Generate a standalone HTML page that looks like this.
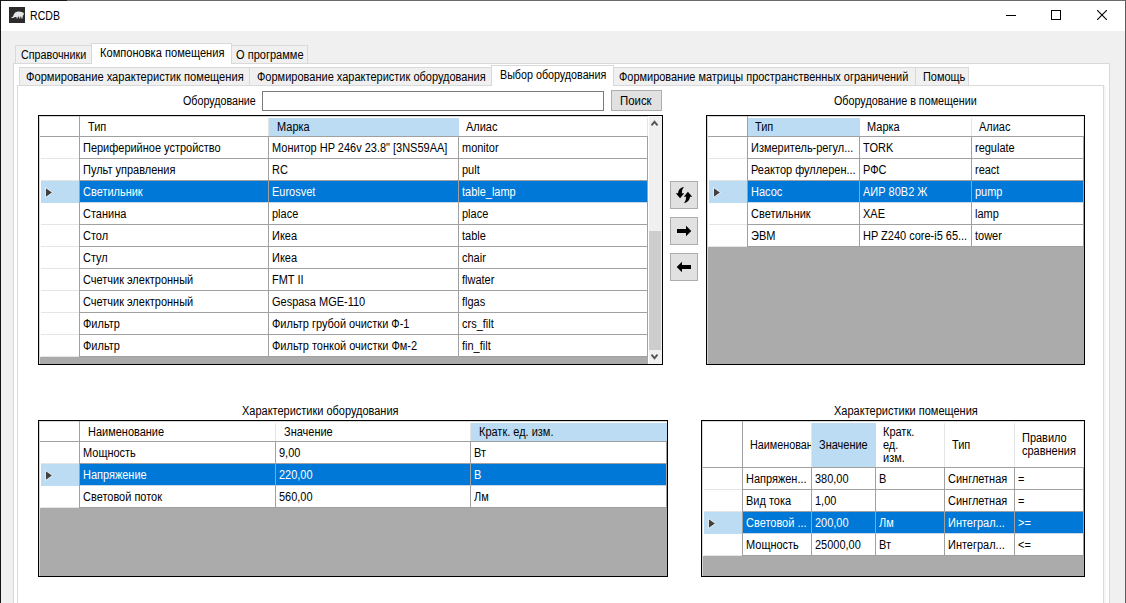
<!DOCTYPE html>
<html><head><meta charset="utf-8"><style>
html,body{margin:0;padding:0}
body{width:1126px;height:603px;overflow:hidden;position:relative;background:#f0f0f0}
body>div{position:absolute;box-sizing:content-box}
.t{position:absolute;font-family:"Liberation Sans",sans-serif;font-size:12px;line-height:12px;white-space:nowrap;transform-origin:0 0}
.c{position:absolute;height:14px;overflow:hidden}
</style></head><body>
<div style="left:0px;top:0px;width:1126px;height:603px;background:#f0f0f0;"></div>
<div style="left:1px;top:1px;width:1124px;height:30px;background:#fff;"></div>
<div style="left:0px;top:0px;width:1126px;height:1px;background:#6a6a6a;"></div>
<div style="left:0px;top:0px;width:67px;height:1px;background:#1a1a1a;"></div>
<div style="left:0px;top:0px;width:1px;height:603px;background:#141414;"></div>
<div style="left:1125px;top:0px;width:1px;height:603px;background:#5c5c5c;"></div>
<div style="left:9px;top:7px;width:16px;height:16px;background:#2b2b2b;"></div>
<svg style="position:absolute;left:9px;top:7px" width="16" height="16" viewBox="0 0 16 16"><path d="M2 10.8 L4 9.4 L5 7 Q6 4.8 9 4.5 Q13 4.2 14.8 6 Q15.2 7.5 14 8.6 L13.4 11.6 L12.4 11.6 L12.2 9.6 L11.4 9.6 L11.2 11.4 L10.3 11.4 L10.1 9.7 L8.8 9.7 L8.6 11.5 L7.7 11.5 L7.4 9.9 L6 10.1 Q4.5 11.4 2 10.8 Z" fill="#e6e6e6"/></svg>
<div class="t" style="left:30px;top:10px;color:#000;transform:scaleX(0.88);">RCDB</div>
<div style="left:1006px;top:15px;width:10px;height:1px;background:#000;"></div>
<div style="left:1051px;top:10px;width:8px;height:8px;border:1px solid #000;background:transparent;"></div>
<svg style="position:absolute;left:1097px;top:10px" width="10" height="10" viewBox="0 0 10 10"><path d="M0 0 L10 10 M10 0 L0 10" stroke="#000" stroke-width="1.1"/></svg>
<div style="left:13px;top:63px;width:1097px;height:540px;background:#d9d9d9;"></div>
<div style="left:14px;top:64px;width:1095px;height:539px;background:#fff;"></div>
<div style="left:15px;top:45px;width:75px;height:17px;border:1px solid #d9d9d9;background:#f0f0f0;border-bottom:none;height:17px"></div>
<div style="left:231px;top:45px;width:75px;height:17px;border:1px solid #d9d9d9;background:#f0f0f0;border-bottom:none;height:17px"></div>
<div style="left:91px;top:43px;width:139px;height:19px;border:1px solid #d9d9d9;background:#fff;border-bottom:none;height:20px"></div>
<div class="t" style="left:21px;top:49px;color:#000;transform:scaleX(0.897237);">Справочники</div>
<div class="t" style="left:100px;top:47px;color:#000;transform:scaleX(0.924264);">Компоновка помещения</div>
<div class="t" style="left:236px;top:49px;color:#000;transform:scaleX(0.920403);">О программе</div>
<div style="left:17px;top:85px;width:1087px;height:518px;background:#d9d9d9;"></div>
<div style="left:18px;top:86px;width:1085px;height:517px;background:#fff;"></div>
<div style="left:1104px;top:86px;width:2px;height:517px;background:#f5f5f5;"></div>
<div style="left:19px;top:67px;width:229px;height:17px;border:1px solid #d9d9d9;background:#f0f0f0;border-bottom:none;height:17px"></div>
<div style="left:249px;top:67px;width:241px;height:17px;border:1px solid #d9d9d9;background:#f0f0f0;border-bottom:none;height:17px"></div>
<div style="left:613px;top:67px;width:301px;height:17px;border:1px solid #d9d9d9;background:#f0f0f0;border-bottom:none;height:17px"></div>
<div style="left:915px;top:67px;width:52px;height:17px;border:1px solid #d9d9d9;background:#f0f0f0;border-bottom:none;height:17px"></div>
<div style="left:491px;top:65px;width:121px;height:19px;border:1px solid #d9d9d9;background:#fff;border-bottom:none;height:20px"></div>
<div class="t" style="left:26px;top:71px;color:#000;transform:scaleX(0.926937);">Формирование характеристик помещения</div>
<div class="t" style="left:257px;top:71px;color:#000;transform:scaleX(0.917235);">Формирование характеристик оборудования</div>
<div class="t" style="left:500px;top:69px;color:#000;transform:scaleX(0.89397);">Выбор оборудования</div>
<div class="t" style="left:619px;top:71px;color:#000;transform:scaleX(0.9125819999999999);">Формирование матрицы пространственных ограничений</div>
<div class="t" style="left:923px;top:71px;color:#000;transform:scaleX(0.912087);">Помощь</div>
<div class="t" style="left:183px;top:95px;color:#000;transform:scaleX(0.891594);">Оборудование</div>
<div style="left:262px;top:91px;width:340px;height:18px;border:1px solid #7a7a7a;background:#fff;"></div>
<div style="left:611px;top:90px;width:49px;height:19px;border:1px solid #adadad;background:#e1e1e1;"></div>
<div class="t" style="left:620px;top:95px;color:#000;transform:scaleX(0.9503999999999999);">Поиск</div>
<div class="t" style="left:834px;top:95px;color:#000;transform:scaleX(0.896346);">Оборудование в помещении</div>
<div style="left:38px;top:115px;width:623px;height:248px;border:1px solid #000;background:#ababab;"></div>
<div style="left:39px;top:116px;width:623px;height:20px;background:#fff;"></div>
<div style="left:39px;top:116px;width:623px;height:1px;background:#d8d8d8;"></div>
<div style="left:39px;top:136px;width:609px;height:1px;background:#a0a0a0;"></div>
<div style="left:79px;top:116px;width:1px;height:21px;background:#a0a0a0;"></div>
<div style="left:268px;top:118px;width:1px;height:18px;background:#e5e5e5;"></div>
<div style="left:458px;top:118px;width:1px;height:18px;background:#e5e5e5;"></div>
<div style="left:647px;top:118px;width:1px;height:18px;background:#e5e5e5;"></div>
<div style="left:269px;top:118px;width:190px;height:18px;background:#bcdcf4;"></div>
<div style="left:39px;top:137px;width:609px;height:22px;background:#fff;"></div>
<div style="left:41px;top:158px;width:38px;height:1px;background:#e5e5e5;"></div>
<div style="left:80px;top:158px;width:568px;height:1px;background:#a0a0a0;"></div>
<div style="left:79px;top:137px;width:1px;height:22px;background:#a0a0a0;"></div>
<div style="left:268px;top:137px;width:1px;height:22px;background:#a0a0a0;"></div>
<div style="left:458px;top:137px;width:1px;height:22px;background:#a0a0a0;"></div>
<div style="left:647px;top:137px;width:1px;height:22px;background:#a0a0a0;"></div>
<div style="left:39px;top:159px;width:609px;height:22px;background:#fff;"></div>
<div style="left:41px;top:180px;width:38px;height:1px;background:#e5e5e5;"></div>
<div style="left:80px;top:180px;width:568px;height:1px;background:#a0a0a0;"></div>
<div style="left:79px;top:159px;width:1px;height:22px;background:#a0a0a0;"></div>
<div style="left:268px;top:159px;width:1px;height:22px;background:#a0a0a0;"></div>
<div style="left:458px;top:159px;width:1px;height:22px;background:#a0a0a0;"></div>
<div style="left:647px;top:159px;width:1px;height:22px;background:#a0a0a0;"></div>
<div style="left:39px;top:181px;width:609px;height:22px;background:#fff;"></div>
<div style="left:41px;top:181px;width:38px;height:22px;background:#bcdcf4;"></div>
<div style="left:80px;top:181px;width:568px;height:21px;background:#0078d7;"></div>
<div style="left:80px;top:202px;width:568px;height:1px;background:#c8d8e8;"></div>
<svg style="position:absolute;left:45px;top:187px" width="9" height="12" viewBox="0 0 9 12"><path d="M0.5 0.5 L7.5 5.5 L0.5 10.5 Z" fill="#404040" stroke="#fff" stroke-width="0.8"/></svg>
<div style="left:79px;top:181px;width:1px;height:22px;background:#a0a0a0;"></div>
<div style="left:268px;top:181px;width:1px;height:22px;background:#a0a0a0;"></div>
<div style="left:458px;top:181px;width:1px;height:22px;background:#a0a0a0;"></div>
<div style="left:647px;top:181px;width:1px;height:22px;background:#a0a0a0;"></div>
<div style="left:39px;top:203px;width:609px;height:22px;background:#fff;"></div>
<div style="left:41px;top:224px;width:38px;height:1px;background:#e5e5e5;"></div>
<div style="left:80px;top:224px;width:568px;height:1px;background:#a0a0a0;"></div>
<div style="left:79px;top:203px;width:1px;height:22px;background:#a0a0a0;"></div>
<div style="left:268px;top:203px;width:1px;height:22px;background:#a0a0a0;"></div>
<div style="left:458px;top:203px;width:1px;height:22px;background:#a0a0a0;"></div>
<div style="left:647px;top:203px;width:1px;height:22px;background:#a0a0a0;"></div>
<div style="left:39px;top:225px;width:609px;height:22px;background:#fff;"></div>
<div style="left:41px;top:246px;width:38px;height:1px;background:#e5e5e5;"></div>
<div style="left:80px;top:246px;width:568px;height:1px;background:#a0a0a0;"></div>
<div style="left:79px;top:225px;width:1px;height:22px;background:#a0a0a0;"></div>
<div style="left:268px;top:225px;width:1px;height:22px;background:#a0a0a0;"></div>
<div style="left:458px;top:225px;width:1px;height:22px;background:#a0a0a0;"></div>
<div style="left:647px;top:225px;width:1px;height:22px;background:#a0a0a0;"></div>
<div style="left:39px;top:247px;width:609px;height:22px;background:#fff;"></div>
<div style="left:41px;top:268px;width:38px;height:1px;background:#e5e5e5;"></div>
<div style="left:80px;top:268px;width:568px;height:1px;background:#a0a0a0;"></div>
<div style="left:79px;top:247px;width:1px;height:22px;background:#a0a0a0;"></div>
<div style="left:268px;top:247px;width:1px;height:22px;background:#a0a0a0;"></div>
<div style="left:458px;top:247px;width:1px;height:22px;background:#a0a0a0;"></div>
<div style="left:647px;top:247px;width:1px;height:22px;background:#a0a0a0;"></div>
<div style="left:39px;top:269px;width:609px;height:22px;background:#fff;"></div>
<div style="left:41px;top:290px;width:38px;height:1px;background:#e5e5e5;"></div>
<div style="left:80px;top:290px;width:568px;height:1px;background:#a0a0a0;"></div>
<div style="left:79px;top:269px;width:1px;height:22px;background:#a0a0a0;"></div>
<div style="left:268px;top:269px;width:1px;height:22px;background:#a0a0a0;"></div>
<div style="left:458px;top:269px;width:1px;height:22px;background:#a0a0a0;"></div>
<div style="left:647px;top:269px;width:1px;height:22px;background:#a0a0a0;"></div>
<div style="left:39px;top:291px;width:609px;height:22px;background:#fff;"></div>
<div style="left:41px;top:312px;width:38px;height:1px;background:#e5e5e5;"></div>
<div style="left:80px;top:312px;width:568px;height:1px;background:#a0a0a0;"></div>
<div style="left:79px;top:291px;width:1px;height:22px;background:#a0a0a0;"></div>
<div style="left:268px;top:291px;width:1px;height:22px;background:#a0a0a0;"></div>
<div style="left:458px;top:291px;width:1px;height:22px;background:#a0a0a0;"></div>
<div style="left:647px;top:291px;width:1px;height:22px;background:#a0a0a0;"></div>
<div style="left:39px;top:313px;width:609px;height:22px;background:#fff;"></div>
<div style="left:41px;top:334px;width:38px;height:1px;background:#e5e5e5;"></div>
<div style="left:80px;top:334px;width:568px;height:1px;background:#a0a0a0;"></div>
<div style="left:79px;top:313px;width:1px;height:22px;background:#a0a0a0;"></div>
<div style="left:268px;top:313px;width:1px;height:22px;background:#a0a0a0;"></div>
<div style="left:458px;top:313px;width:1px;height:22px;background:#a0a0a0;"></div>
<div style="left:647px;top:313px;width:1px;height:22px;background:#a0a0a0;"></div>
<div style="left:39px;top:335px;width:609px;height:22px;background:#fff;"></div>
<div style="left:41px;top:356px;width:38px;height:1px;background:#e5e5e5;"></div>
<div style="left:80px;top:356px;width:568px;height:1px;background:#a0a0a0;"></div>
<div style="left:79px;top:335px;width:1px;height:22px;background:#a0a0a0;"></div>
<div style="left:268px;top:335px;width:1px;height:22px;background:#a0a0a0;"></div>
<div style="left:458px;top:335px;width:1px;height:22px;background:#a0a0a0;"></div>
<div style="left:647px;top:335px;width:1px;height:22px;background:#a0a0a0;"></div>
<div style="left:39px;top:116px;width:1px;height:248px;background:#d4d4d4;"></div>
<div class="t" style="left:88px;top:121px;color:#000;transform:scaleX(0.915);">Тип</div>
<div class="t" style="left:277px;top:121px;color:#000;transform:scaleX(0.915);">Марка</div>
<div class="t" style="left:466px;top:121px;color:#000;transform:scaleX(0.915);">Алиас</div>
<div class="c" style="left:80px;top:142px;width:188px;"><div class="t" style="left:3px;top:0;color:#000;transform:scaleX(0.915)">Периферийное устройство</div></div>
<div class="c" style="left:269px;top:142px;width:189px;"><div class="t" style="left:3px;top:0;color:#000;transform:scaleX(0.915)">Монитор HP 246v 23.8" [3NS59AA]</div></div>
<div class="c" style="left:459px;top:142px;width:188px;"><div class="t" style="left:3px;top:0;color:#000;transform:scaleX(0.915)">monitor</div></div>
<div class="c" style="left:80px;top:164px;width:188px;"><div class="t" style="left:3px;top:0;color:#000;transform:scaleX(0.915)">Пульт управления</div></div>
<div class="c" style="left:269px;top:164px;width:189px;"><div class="t" style="left:3px;top:0;color:#000;transform:scaleX(0.915)">RC</div></div>
<div class="c" style="left:459px;top:164px;width:188px;"><div class="t" style="left:3px;top:0;color:#000;transform:scaleX(0.915)">pult</div></div>
<div class="c" style="left:80px;top:186px;width:188px;"><div class="t" style="left:3px;top:0;color:#fff;transform:scaleX(0.915)">Светильник</div></div>
<div class="c" style="left:269px;top:186px;width:189px;"><div class="t" style="left:3px;top:0;color:#fff;transform:scaleX(0.915)">Eurosvet</div></div>
<div class="c" style="left:459px;top:186px;width:188px;"><div class="t" style="left:3px;top:0;color:#fff;transform:scaleX(0.915)">table_lamp</div></div>
<div class="c" style="left:80px;top:208px;width:188px;"><div class="t" style="left:3px;top:0;color:#000;transform:scaleX(0.915)">Станина</div></div>
<div class="c" style="left:269px;top:208px;width:189px;"><div class="t" style="left:3px;top:0;color:#000;transform:scaleX(0.915)">place</div></div>
<div class="c" style="left:459px;top:208px;width:188px;"><div class="t" style="left:3px;top:0;color:#000;transform:scaleX(0.915)">place</div></div>
<div class="c" style="left:80px;top:230px;width:188px;"><div class="t" style="left:3px;top:0;color:#000;transform:scaleX(0.915)">Стол</div></div>
<div class="c" style="left:269px;top:230px;width:189px;"><div class="t" style="left:3px;top:0;color:#000;transform:scaleX(0.915)">Икеа</div></div>
<div class="c" style="left:459px;top:230px;width:188px;"><div class="t" style="left:3px;top:0;color:#000;transform:scaleX(0.915)">table</div></div>
<div class="c" style="left:80px;top:252px;width:188px;"><div class="t" style="left:3px;top:0;color:#000;transform:scaleX(0.915)">Стул</div></div>
<div class="c" style="left:269px;top:252px;width:189px;"><div class="t" style="left:3px;top:0;color:#000;transform:scaleX(0.915)">Икеа</div></div>
<div class="c" style="left:459px;top:252px;width:188px;"><div class="t" style="left:3px;top:0;color:#000;transform:scaleX(0.915)">chair</div></div>
<div class="c" style="left:80px;top:274px;width:188px;"><div class="t" style="left:3px;top:0;color:#000;transform:scaleX(0.915)">Счетчик электронный</div></div>
<div class="c" style="left:269px;top:274px;width:189px;"><div class="t" style="left:3px;top:0;color:#000;transform:scaleX(0.915)">FMT II</div></div>
<div class="c" style="left:459px;top:274px;width:188px;"><div class="t" style="left:3px;top:0;color:#000;transform:scaleX(0.915)">flwater</div></div>
<div class="c" style="left:80px;top:296px;width:188px;"><div class="t" style="left:3px;top:0;color:#000;transform:scaleX(0.915)">Счетчик электронный</div></div>
<div class="c" style="left:269px;top:296px;width:189px;"><div class="t" style="left:3px;top:0;color:#000;transform:scaleX(0.915)">Gespasa MGE-110</div></div>
<div class="c" style="left:459px;top:296px;width:188px;"><div class="t" style="left:3px;top:0;color:#000;transform:scaleX(0.915)">flgas</div></div>
<div class="c" style="left:80px;top:318px;width:188px;"><div class="t" style="left:3px;top:0;color:#000;transform:scaleX(0.915)">Фильтр</div></div>
<div class="c" style="left:269px;top:318px;width:189px;"><div class="t" style="left:3px;top:0;color:#000;transform:scaleX(0.915)">Фильтр грубой очистки Ф-1</div></div>
<div class="c" style="left:459px;top:318px;width:188px;"><div class="t" style="left:3px;top:0;color:#000;transform:scaleX(0.915)">crs_filt</div></div>
<div class="c" style="left:80px;top:340px;width:188px;"><div class="t" style="left:3px;top:0;color:#000;transform:scaleX(0.915)">Фильтр</div></div>
<div class="c" style="left:269px;top:340px;width:189px;"><div class="t" style="left:3px;top:0;color:#000;transform:scaleX(0.915)">Фильтр тонкой очистки Фм-2</div></div>
<div class="c" style="left:459px;top:340px;width:188px;"><div class="t" style="left:3px;top:0;color:#000;transform:scaleX(0.915)">fin_filt</div></div>
<div style="left:648px;top:116px;width:1px;height:248px;background:#fff;"></div>
<div style="left:649px;top:116px;width:13px;height:248px;background:#f0f0f0;"></div>
<div style="left:649px;top:231px;width:12px;height:119px;background:#cdcdcd;"></div>
<svg style="position:absolute;left:650px;top:119px" width="10" height="8" viewBox="0 0 10 8"><path d="M1.5 6.3 L4.5 2.8 L7.5 6.3" fill="none" stroke="#555" stroke-width="1.9"/></svg>
<svg style="position:absolute;left:650px;top:353px" width="10" height="8" viewBox="0 0 10 8"><path d="M1.5 1.7 L4.5 5.2 L7.5 1.7" fill="none" stroke="#555" stroke-width="1.9"/></svg>
<div style="left:706px;top:115px;width:377px;height:248px;border:1px solid #000;background:#ababab;"></div>
<div style="left:707px;top:116px;width:377px;height:20px;background:#fff;"></div>
<div style="left:707px;top:116px;width:377px;height:1px;background:#d8d8d8;"></div>
<div style="left:707px;top:136px;width:377px;height:1px;background:#a0a0a0;"></div>
<div style="left:747px;top:116px;width:1px;height:21px;background:#a0a0a0;"></div>
<div style="left:859px;top:118px;width:1px;height:18px;background:#e5e5e5;"></div>
<div style="left:971px;top:118px;width:1px;height:18px;background:#e5e5e5;"></div>
<div style="left:1083px;top:118px;width:1px;height:18px;background:#e5e5e5;"></div>
<div style="left:748px;top:118px;width:112px;height:18px;background:#bcdcf4;"></div>
<div style="left:707px;top:137px;width:377px;height:22px;background:#fff;"></div>
<div style="left:709px;top:158px;width:38px;height:1px;background:#e5e5e5;"></div>
<div style="left:748px;top:158px;width:336px;height:1px;background:#a0a0a0;"></div>
<div style="left:747px;top:137px;width:1px;height:22px;background:#a0a0a0;"></div>
<div style="left:859px;top:137px;width:1px;height:22px;background:#a0a0a0;"></div>
<div style="left:971px;top:137px;width:1px;height:22px;background:#a0a0a0;"></div>
<div style="left:1083px;top:137px;width:1px;height:22px;background:#a0a0a0;"></div>
<div style="left:707px;top:159px;width:377px;height:22px;background:#fff;"></div>
<div style="left:709px;top:180px;width:38px;height:1px;background:#e5e5e5;"></div>
<div style="left:748px;top:180px;width:336px;height:1px;background:#a0a0a0;"></div>
<div style="left:747px;top:159px;width:1px;height:22px;background:#a0a0a0;"></div>
<div style="left:859px;top:159px;width:1px;height:22px;background:#a0a0a0;"></div>
<div style="left:971px;top:159px;width:1px;height:22px;background:#a0a0a0;"></div>
<div style="left:1083px;top:159px;width:1px;height:22px;background:#a0a0a0;"></div>
<div style="left:707px;top:181px;width:377px;height:22px;background:#fff;"></div>
<div style="left:709px;top:181px;width:38px;height:22px;background:#bcdcf4;"></div>
<div style="left:748px;top:181px;width:336px;height:21px;background:#0078d7;"></div>
<div style="left:748px;top:202px;width:336px;height:1px;background:#c8d8e8;"></div>
<svg style="position:absolute;left:713px;top:187px" width="9" height="12" viewBox="0 0 9 12"><path d="M0.5 0.5 L7.5 5.5 L0.5 10.5 Z" fill="#404040" stroke="#fff" stroke-width="0.8"/></svg>
<div style="left:747px;top:181px;width:1px;height:22px;background:#a0a0a0;"></div>
<div style="left:859px;top:181px;width:1px;height:22px;background:#a0a0a0;"></div>
<div style="left:971px;top:181px;width:1px;height:22px;background:#a0a0a0;"></div>
<div style="left:1083px;top:181px;width:1px;height:22px;background:#a0a0a0;"></div>
<div style="left:707px;top:203px;width:377px;height:22px;background:#fff;"></div>
<div style="left:709px;top:224px;width:38px;height:1px;background:#e5e5e5;"></div>
<div style="left:748px;top:224px;width:336px;height:1px;background:#a0a0a0;"></div>
<div style="left:747px;top:203px;width:1px;height:22px;background:#a0a0a0;"></div>
<div style="left:859px;top:203px;width:1px;height:22px;background:#a0a0a0;"></div>
<div style="left:971px;top:203px;width:1px;height:22px;background:#a0a0a0;"></div>
<div style="left:1083px;top:203px;width:1px;height:22px;background:#a0a0a0;"></div>
<div style="left:707px;top:225px;width:377px;height:22px;background:#fff;"></div>
<div style="left:709px;top:246px;width:38px;height:1px;background:#e5e5e5;"></div>
<div style="left:748px;top:246px;width:336px;height:1px;background:#a0a0a0;"></div>
<div style="left:747px;top:225px;width:1px;height:22px;background:#a0a0a0;"></div>
<div style="left:859px;top:225px;width:1px;height:22px;background:#a0a0a0;"></div>
<div style="left:971px;top:225px;width:1px;height:22px;background:#a0a0a0;"></div>
<div style="left:1083px;top:225px;width:1px;height:22px;background:#a0a0a0;"></div>
<div style="left:707px;top:116px;width:1px;height:248px;background:#d4d4d4;"></div>
<div class="t" style="left:755px;top:121px;color:#000;transform:scaleX(0.915);">Тип</div>
<div class="t" style="left:867px;top:121px;color:#000;transform:scaleX(0.915);">Марка</div>
<div class="t" style="left:979px;top:121px;color:#000;transform:scaleX(0.915);">Алиас</div>
<div class="c" style="left:748px;top:142px;width:111px;"><div class="t" style="left:3px;top:0;color:#000;transform:scaleX(0.915)">Измеритель-регул...</div></div>
<div class="c" style="left:860px;top:142px;width:111px;"><div class="t" style="left:3px;top:0;color:#000;transform:scaleX(0.915)">TORK</div></div>
<div class="c" style="left:972px;top:142px;width:111px;"><div class="t" style="left:3px;top:0;color:#000;transform:scaleX(0.915)">regulate</div></div>
<div class="c" style="left:748px;top:164px;width:111px;"><div class="t" style="left:3px;top:0;color:#000;transform:scaleX(0.915)">Реактор фуллерен...</div></div>
<div class="c" style="left:860px;top:164px;width:111px;"><div class="t" style="left:3px;top:0;color:#000;transform:scaleX(0.915)">РФС</div></div>
<div class="c" style="left:972px;top:164px;width:111px;"><div class="t" style="left:3px;top:0;color:#000;transform:scaleX(0.915)">react</div></div>
<div class="c" style="left:748px;top:186px;width:111px;"><div class="t" style="left:3px;top:0;color:#fff;transform:scaleX(0.915)">Насос</div></div>
<div class="c" style="left:860px;top:186px;width:111px;"><div class="t" style="left:3px;top:0;color:#fff;transform:scaleX(0.915)">АИР 80В2 Ж</div></div>
<div class="c" style="left:972px;top:186px;width:111px;"><div class="t" style="left:3px;top:0;color:#fff;transform:scaleX(0.915)">pump</div></div>
<div class="c" style="left:748px;top:208px;width:111px;"><div class="t" style="left:3px;top:0;color:#000;transform:scaleX(0.915)">Светильник</div></div>
<div class="c" style="left:860px;top:208px;width:111px;"><div class="t" style="left:3px;top:0;color:#000;transform:scaleX(0.915)">XAE</div></div>
<div class="c" style="left:972px;top:208px;width:111px;"><div class="t" style="left:3px;top:0;color:#000;transform:scaleX(0.915)">lamp</div></div>
<div class="c" style="left:748px;top:230px;width:111px;"><div class="t" style="left:3px;top:0;color:#000;transform:scaleX(0.915)">ЭВМ</div></div>
<div class="c" style="left:860px;top:230px;width:111px;"><div class="t" style="left:3px;top:0;color:#000;transform:scaleX(0.915)">HP Z240 core-i5 65...</div></div>
<div class="c" style="left:972px;top:230px;width:111px;"><div class="t" style="left:3px;top:0;color:#000;transform:scaleX(0.915)">tower</div></div>
<div style="left:670px;top:181px;width:26px;height:26px;border:1px solid #adadad;background:#e1e1e1;"></div>
<div style="left:670px;top:217px;width:26px;height:26px;border:1px solid #adadad;background:#e1e1e1;"></div>
<div style="left:670px;top:253px;width:26px;height:26px;border:1px solid #adadad;background:#e1e1e1;"></div>
<svg style="position:absolute;left:670px;top:181px" width="28" height="28" viewBox="0 0 28 28">
<path d="M13.9 5.8 Q8.3 7.3 8 12.2 L5.8 12.2 L10.1 17.3 L14.2 12.2 L11.8 12.2 Q11.8 8.6 13.9 5.8 Z" fill="#000"/>
<path d="M14.1 22.2 Q19.7 20.7 20 15.8 L22.2 15.8 L17.9 10.7 L13.8 15.8 L16.2 15.8 Q16.2 19.4 14.1 22.2 Z" fill="#000"/>
</svg>
<svg style="position:absolute;left:670px;top:217px" width="28" height="28" viewBox="0 0 28 28">
<path d="M7 12 L16 12 L16 8.8 L21.3 14 L16 19.2 L16 16 L7 16 Z" fill="#000"/></svg>
<svg style="position:absolute;left:670px;top:253px" width="28" height="28" viewBox="0 0 28 28">
<path d="M21 12 L12 12 L12 8.8 L6.7 14 L12 19.2 L12 16 L21 16 Z" fill="#000"/></svg>
<div class="t" style="left:242px;top:405px;color:#000;transform:scaleX(0.9146610000000001);">Характеристики оборудования</div>
<div class="t" style="left:834px;top:405px;color:#000;transform:scaleX(0.918027);">Характеристики помещения</div>
<div style="left:38px;top:420px;width:628px;height:155px;border:1px solid #000;background:#ababab;"></div>
<div style="left:39px;top:421px;width:628px;height:20px;background:#fff;"></div>
<div style="left:39px;top:421px;width:628px;height:1px;background:#d8d8d8;"></div>
<div style="left:39px;top:441px;width:628px;height:1px;background:#a0a0a0;"></div>
<div style="left:79px;top:421px;width:1px;height:21px;background:#a0a0a0;"></div>
<div style="left:275px;top:423px;width:1px;height:18px;background:#e5e5e5;"></div>
<div style="left:470px;top:423px;width:1px;height:18px;background:#e5e5e5;"></div>
<div style="left:666px;top:423px;width:1px;height:18px;background:#e5e5e5;"></div>
<div style="left:471px;top:423px;width:196px;height:18px;background:#bcdcf4;"></div>
<div style="left:39px;top:442px;width:628px;height:22px;background:#fff;"></div>
<div style="left:41px;top:463px;width:38px;height:1px;background:#e5e5e5;"></div>
<div style="left:80px;top:463px;width:587px;height:1px;background:#a0a0a0;"></div>
<div style="left:79px;top:442px;width:1px;height:22px;background:#a0a0a0;"></div>
<div style="left:275px;top:442px;width:1px;height:22px;background:#a0a0a0;"></div>
<div style="left:470px;top:442px;width:1px;height:22px;background:#a0a0a0;"></div>
<div style="left:666px;top:442px;width:1px;height:22px;background:#a0a0a0;"></div>
<div style="left:39px;top:464px;width:628px;height:22px;background:#fff;"></div>
<div style="left:41px;top:464px;width:38px;height:22px;background:#bcdcf4;"></div>
<div style="left:80px;top:464px;width:587px;height:21px;background:#0078d7;"></div>
<div style="left:80px;top:485px;width:587px;height:1px;background:#c8d8e8;"></div>
<svg style="position:absolute;left:45px;top:470px" width="9" height="12" viewBox="0 0 9 12"><path d="M0.5 0.5 L7.5 5.5 L0.5 10.5 Z" fill="#404040" stroke="#fff" stroke-width="0.8"/></svg>
<div style="left:79px;top:464px;width:1px;height:22px;background:#a0a0a0;"></div>
<div style="left:275px;top:464px;width:1px;height:22px;background:#a0a0a0;"></div>
<div style="left:470px;top:464px;width:1px;height:22px;background:#a0a0a0;"></div>
<div style="left:666px;top:464px;width:1px;height:22px;background:#a0a0a0;"></div>
<div style="left:39px;top:486px;width:628px;height:22px;background:#fff;"></div>
<div style="left:41px;top:507px;width:38px;height:1px;background:#e5e5e5;"></div>
<div style="left:80px;top:507px;width:587px;height:1px;background:#a0a0a0;"></div>
<div style="left:79px;top:486px;width:1px;height:22px;background:#a0a0a0;"></div>
<div style="left:275px;top:486px;width:1px;height:22px;background:#a0a0a0;"></div>
<div style="left:470px;top:486px;width:1px;height:22px;background:#a0a0a0;"></div>
<div style="left:666px;top:486px;width:1px;height:22px;background:#a0a0a0;"></div>
<div style="left:39px;top:421px;width:1px;height:155px;background:#d4d4d4;"></div>
<div class="t" style="left:88px;top:426px;color:#000;transform:scaleX(0.915);">Наименование</div>
<div class="t" style="left:284px;top:426px;color:#000;transform:scaleX(0.915);">Значение</div>
<div class="t" style="left:479px;top:426px;color:#000;transform:scaleX(0.915);">Кратк. ед. изм.</div>
<div class="c" style="left:80px;top:447px;width:195px;"><div class="t" style="left:3px;top:0;color:#000;transform:scaleX(0.915)">Мощность</div></div>
<div class="c" style="left:276px;top:447px;width:194px;"><div class="t" style="left:3px;top:0;color:#000;transform:scaleX(0.915)">9,00</div></div>
<div class="c" style="left:471px;top:447px;width:195px;"><div class="t" style="left:3px;top:0;color:#000;transform:scaleX(0.915)">Вт</div></div>
<div class="c" style="left:80px;top:469px;width:195px;"><div class="t" style="left:3px;top:0;color:#fff;transform:scaleX(0.915)">Напряжение</div></div>
<div class="c" style="left:276px;top:469px;width:194px;"><div class="t" style="left:3px;top:0;color:#fff;transform:scaleX(0.915)">220,00</div></div>
<div class="c" style="left:471px;top:469px;width:195px;"><div class="t" style="left:3px;top:0;color:#fff;transform:scaleX(0.915)">В</div></div>
<div class="c" style="left:80px;top:491px;width:195px;"><div class="t" style="left:3px;top:0;color:#000;transform:scaleX(0.915)">Световой поток</div></div>
<div class="c" style="left:276px;top:491px;width:194px;"><div class="t" style="left:3px;top:0;color:#000;transform:scaleX(0.915)">560,00</div></div>
<div class="c" style="left:471px;top:491px;width:195px;"><div class="t" style="left:3px;top:0;color:#000;transform:scaleX(0.915)">Лм</div></div>
<div style="left:701px;top:420px;width:382px;height:155px;border:1px solid #000;background:#ababab;"></div>
<div style="left:702px;top:421px;width:382px;height:46px;background:#fff;"></div>
<div style="left:702px;top:421px;width:382px;height:1px;background:#d8d8d8;"></div>
<div style="left:702px;top:467px;width:382px;height:1px;background:#a0a0a0;"></div>
<div style="left:742px;top:421px;width:1px;height:47px;background:#a0a0a0;"></div>
<div style="left:811px;top:423px;width:1px;height:44px;background:#e5e5e5;"></div>
<div style="left:875px;top:423px;width:1px;height:44px;background:#e5e5e5;"></div>
<div style="left:944px;top:423px;width:1px;height:44px;background:#e5e5e5;"></div>
<div style="left:1014px;top:423px;width:1px;height:44px;background:#e5e5e5;"></div>
<div style="left:1083px;top:423px;width:1px;height:44px;background:#e5e5e5;"></div>
<div style="left:812px;top:423px;width:64px;height:44px;background:#bcdcf4;"></div>
<div style="left:702px;top:468px;width:382px;height:22px;background:#fff;"></div>
<div style="left:704px;top:489px;width:38px;height:1px;background:#e5e5e5;"></div>
<div style="left:743px;top:489px;width:341px;height:1px;background:#a0a0a0;"></div>
<div style="left:742px;top:468px;width:1px;height:22px;background:#a0a0a0;"></div>
<div style="left:811px;top:468px;width:1px;height:22px;background:#a0a0a0;"></div>
<div style="left:875px;top:468px;width:1px;height:22px;background:#a0a0a0;"></div>
<div style="left:944px;top:468px;width:1px;height:22px;background:#a0a0a0;"></div>
<div style="left:1014px;top:468px;width:1px;height:22px;background:#a0a0a0;"></div>
<div style="left:1083px;top:468px;width:1px;height:22px;background:#a0a0a0;"></div>
<div style="left:702px;top:490px;width:382px;height:22px;background:#fff;"></div>
<div style="left:704px;top:511px;width:38px;height:1px;background:#e5e5e5;"></div>
<div style="left:743px;top:511px;width:341px;height:1px;background:#a0a0a0;"></div>
<div style="left:742px;top:490px;width:1px;height:22px;background:#a0a0a0;"></div>
<div style="left:811px;top:490px;width:1px;height:22px;background:#a0a0a0;"></div>
<div style="left:875px;top:490px;width:1px;height:22px;background:#a0a0a0;"></div>
<div style="left:944px;top:490px;width:1px;height:22px;background:#a0a0a0;"></div>
<div style="left:1014px;top:490px;width:1px;height:22px;background:#a0a0a0;"></div>
<div style="left:1083px;top:490px;width:1px;height:22px;background:#a0a0a0;"></div>
<div style="left:702px;top:512px;width:382px;height:22px;background:#fff;"></div>
<div style="left:704px;top:512px;width:38px;height:22px;background:#bcdcf4;"></div>
<div style="left:743px;top:512px;width:341px;height:21px;background:#0078d7;"></div>
<div style="left:743px;top:533px;width:341px;height:1px;background:#c8d8e8;"></div>
<svg style="position:absolute;left:708px;top:518px" width="9" height="12" viewBox="0 0 9 12"><path d="M0.5 0.5 L7.5 5.5 L0.5 10.5 Z" fill="#404040" stroke="#fff" stroke-width="0.8"/></svg>
<div style="left:742px;top:512px;width:1px;height:22px;background:#a0a0a0;"></div>
<div style="left:811px;top:512px;width:1px;height:22px;background:#a0a0a0;"></div>
<div style="left:875px;top:512px;width:1px;height:22px;background:#a0a0a0;"></div>
<div style="left:944px;top:512px;width:1px;height:22px;background:#a0a0a0;"></div>
<div style="left:1014px;top:512px;width:1px;height:22px;background:#a0a0a0;"></div>
<div style="left:1083px;top:512px;width:1px;height:22px;background:#a0a0a0;"></div>
<div style="left:702px;top:534px;width:382px;height:22px;background:#fff;"></div>
<div style="left:704px;top:555px;width:38px;height:1px;background:#e5e5e5;"></div>
<div style="left:743px;top:555px;width:341px;height:1px;background:#a0a0a0;"></div>
<div style="left:742px;top:534px;width:1px;height:22px;background:#a0a0a0;"></div>
<div style="left:811px;top:534px;width:1px;height:22px;background:#a0a0a0;"></div>
<div style="left:875px;top:534px;width:1px;height:22px;background:#a0a0a0;"></div>
<div style="left:944px;top:534px;width:1px;height:22px;background:#a0a0a0;"></div>
<div style="left:1014px;top:534px;width:1px;height:22px;background:#a0a0a0;"></div>
<div style="left:1083px;top:534px;width:1px;height:22px;background:#a0a0a0;"></div>
<div style="left:702px;top:421px;width:1px;height:155px;background:#d4d4d4;"></div>
<div class="c" style="left:743px;top:439px;width:68px"><div class="t" style="left:7px;top:0;transform:scaleX(0.9)">Наименование</div></div>
<div class="t" style="left:819px;top:439px;color:#000;transform:scaleX(0.915);">Значение</div>
<div class="t" style="left:883px;top:426px;color:#000;transform:scaleX(0.915);">Кратк.</div>
<div class="t" style="left:883px;top:439px;color:#000;transform:scaleX(0.915);">ед.</div>
<div class="t" style="left:883px;top:452px;color:#000;transform:scaleX(0.915);">изм.</div>
<div class="t" style="left:952px;top:439px;color:#000;transform:scaleX(0.915);">Тип</div>
<div class="t" style="left:1022px;top:432px;color:#000;transform:scaleX(0.915);">Правило</div>
<div class="t" style="left:1022px;top:445px;color:#000;transform:scaleX(0.915);">сравнения</div>
<div class="c" style="left:743px;top:473px;width:68px;"><div class="t" style="left:3px;top:0;color:#000;transform:scaleX(0.915)">Напряжен...</div></div>
<div class="c" style="left:812px;top:473px;width:63px;"><div class="t" style="left:3px;top:0;color:#000;transform:scaleX(0.915)">380,00</div></div>
<div class="c" style="left:876px;top:473px;width:68px;"><div class="t" style="left:3px;top:0;color:#000;transform:scaleX(0.915)">В</div></div>
<div class="c" style="left:945px;top:473px;width:69px;"><div class="t" style="left:3px;top:0;color:#000;transform:scaleX(0.915)">Синглетная</div></div>
<div class="c" style="left:1015px;top:473px;width:68px;"><div class="t" style="left:3px;top:0;color:#000;transform:scaleX(0.915)">=</div></div>
<div class="c" style="left:743px;top:495px;width:68px;"><div class="t" style="left:3px;top:0;color:#000;transform:scaleX(0.915)">Вид тока</div></div>
<div class="c" style="left:812px;top:495px;width:63px;"><div class="t" style="left:3px;top:0;color:#000;transform:scaleX(0.915)">1,00</div></div>
<div class="c" style="left:945px;top:495px;width:69px;"><div class="t" style="left:3px;top:0;color:#000;transform:scaleX(0.915)">Синглетная</div></div>
<div class="c" style="left:1015px;top:495px;width:68px;"><div class="t" style="left:3px;top:0;color:#000;transform:scaleX(0.915)">=</div></div>
<div class="c" style="left:743px;top:517px;width:68px;"><div class="t" style="left:3px;top:0;color:#fff;transform:scaleX(0.915)">Световой ...</div></div>
<div class="c" style="left:812px;top:517px;width:63px;"><div class="t" style="left:3px;top:0;color:#fff;transform:scaleX(0.915)">200,00</div></div>
<div class="c" style="left:876px;top:517px;width:68px;"><div class="t" style="left:3px;top:0;color:#fff;transform:scaleX(0.915)">Лм</div></div>
<div class="c" style="left:945px;top:517px;width:69px;"><div class="t" style="left:3px;top:0;color:#fff;transform:scaleX(0.915)">Интеграл...</div></div>
<div class="c" style="left:1015px;top:517px;width:68px;"><div class="t" style="left:3px;top:0;color:#fff;transform:scaleX(0.915)">&gt;=</div></div>
<div class="c" style="left:743px;top:539px;width:68px;"><div class="t" style="left:3px;top:0;color:#000;transform:scaleX(0.915)">Мощность</div></div>
<div class="c" style="left:812px;top:539px;width:63px;"><div class="t" style="left:3px;top:0;color:#000;transform:scaleX(0.915)">25000,00</div></div>
<div class="c" style="left:876px;top:539px;width:68px;"><div class="t" style="left:3px;top:0;color:#000;transform:scaleX(0.915)">Вт</div></div>
<div class="c" style="left:945px;top:539px;width:69px;"><div class="t" style="left:3px;top:0;color:#000;transform:scaleX(0.915)">Интеграл...</div></div>
<div class="c" style="left:1015px;top:539px;width:68px;"><div class="t" style="left:3px;top:0;color:#000;transform:scaleX(0.915)">&lt;=</div></div>
</body></html>
